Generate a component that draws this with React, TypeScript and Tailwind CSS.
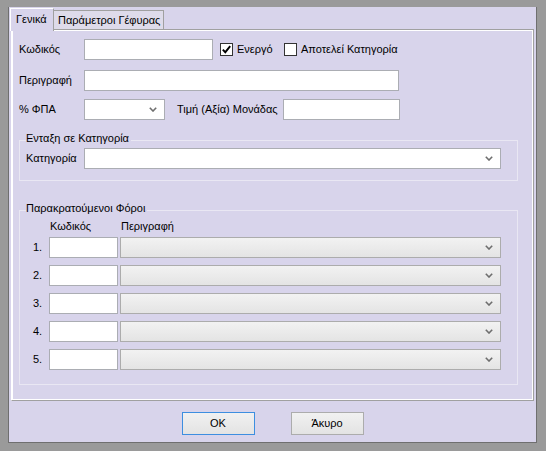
import React from "react";

const Chevron = () => (
  <svg width="8" height="5" viewBox="0 0 8 5" className="block">
    <path d="M0.8 0.8 L4 4 L7.2 0.8" fill="none" stroke="#6e6e6e" strokeWidth="1.6" />
  </svg>
);

const WhiteCombo = ({ w }: { w: string }) => (
  <div className={`${w} h-[21px] bg-white border border-[#abadb3] flex items-center justify-end pr-[7px]`}>
    <Chevron />
  </div>
);

const GrayCombo = () => (
  <div className="w-[381px] h-[21px] bg-linear-to-b from-[#f2f2f2] to-[#e4e4e4] border border-[#acacac] flex items-center justify-end pr-[7px]">
    <Chevron />
  </div>
);

const CheckBox = ({ checked }: { checked?: boolean }) => (
  <div className="w-[13px] h-[13px] border border-[#333333] bg-white flex items-center justify-center">
    {checked && (
      <svg width="11" height="11" viewBox="0 0 11 11" className="block">
        <path d="M1.8 5.6 L4.3 8.2 L9.2 2.2" fill="none" stroke="#000" strokeWidth="1.9" />
      </svg>
    )}
  </div>
);

export default function App() {
  const rows = ["1.", "2.", "3.", "4.", "5."];
  return (
    <div className="w-[546px] h-[451px] bg-[#9a9a9a] pl-[8px] pt-[7px] font-['Liberation_Sans',Arial,sans-serif] text-[11px] leading-[13px] text-black">
      <div className="w-[529px] h-[436px] bg-[#d8d4eb] border-x border-b border-[#6f6f6f] flex flex-col">
        {/* Tabs */}
        <div className="h-[22px] flex items-start pl-[1px]">
          <div className="relative z-10 mt-[1px] w-[44px] h-[23px] bg-[#d8d4eb] border-l border-t border-white border-r border-r-[#a0a0a0] pl-[5px] pt-[4px]">
            Γενικά
          </div>
          <div className="mt-[3px] w-[110px] h-[19px] bg-[#dedbea] border-t border-r border-[#a0a0a0] pl-[4px] pt-[3px]">
            Παράμετροι Γέφυρας
          </div>
        </div>
        {/* Panel */}
        <div className="ml-[2px] w-[523px] h-[372px] border-t border-r border-b border-[#a0a0a0] border-l border-l-white">
          <div className="h-full border border-white flex flex-col">
            {/* Row 1 */}
            <div className="mt-[8px] h-[21px] flex items-center pl-[6px]">
              <div className="w-[65px]">Κωδικός</div>
              <div className="w-[129px] h-[21px] bg-white border border-[#abadb3]" />
              <div className="ml-[7px] w-[64px] flex items-center">
                <CheckBox checked />
                <span className="ml-[4px]">Ενεργό</span>
              </div>
              <div className="flex items-center">
                <CheckBox />
                <span className="ml-[4px]">Αποτελεί Κατηγορία</span>
              </div>
            </div>
            {/* Row 2 */}
            <div className="mt-[10px] h-[21px] flex items-center pl-[6px]">
              <div className="w-[65px]">Περιγραφή</div>
              <div className="w-[315px] h-[21px] bg-white border border-[#abadb3]" />
            </div>
            {/* Row 3 */}
            <div className="mt-[8px] h-[21px] flex items-center pl-[6px]">
              <div className="w-[65px]">% ΦΠΑ</div>
              <WhiteCombo w="w-[81px]" />
              <div className="ml-[12px] w-[106px]">Τιμή (Αξία) Μονάδας</div>
              <div className="w-[117px] h-[21px] bg-white border border-[#abadb3]" />
            </div>
            {/* Group 1 */}
            <div className="relative mt-[20px] ml-[6px] w-[499px] h-[41px] border border-[#e9e7f3] pt-[7px] pl-[6px]">
              <div className="absolute left-[6px] top-[-9px] bg-[#d8d4eb] pr-[2px]">Ενταξη σε Κατηγορία</div>
              <div className="flex items-center h-[21px]">
                <div className="w-[58px]">Κατηγορία</div>
                <WhiteCombo w="w-[417px]" />
              </div>
            </div>
            {/* Group 2 */}
            <div className="relative mt-[29px] ml-[6px] w-[499px] h-[175px] border border-[#e9e7f3] pt-[9px] pl-[13px]">
              <div className="absolute left-[6px] top-[-9px] bg-[#d8d4eb] pr-[2px]">Παρακρατούμενοι Φόροι</div>
              <div className="flex h-[13px]">
                <div className="w-[16px]" />
                <div className="w-[72px] pl-[1px]">Κωδικός</div>
                <div>Περιγραφή</div>
              </div>
              <div className="mt-[4px] flex flex-col gap-[7px]">
                {rows.map((r) => (
                  <div key={r} className="flex items-center h-[21px]">
                    <div className="w-[16px]">{r}</div>
                    <div className="w-[69px] h-[21px] bg-white border border-[#abadb3]" />
                    <div className="ml-[2px]">
                      <GrayCombo />
                    </div>
                  </div>
                ))}
              </div>
            </div>
          </div>
        </div>
        {/* Buttons */}
        <div className="mt-[11px] flex justify-center gap-[36px]">
          <div className="w-[73px] h-[23px] bg-linear-to-b from-[#f1f1f1] to-[#e3e3e3] border border-[#3d8ee0] flex items-center justify-center">
            OK
          </div>
          <div className="w-[73px] h-[23px] bg-linear-to-b from-[#f1f1f1] to-[#e3e3e3] border border-[#acacac] flex items-center justify-center">
            Άκυρο
          </div>
        </div>
      </div>
    </div>
  );
}
